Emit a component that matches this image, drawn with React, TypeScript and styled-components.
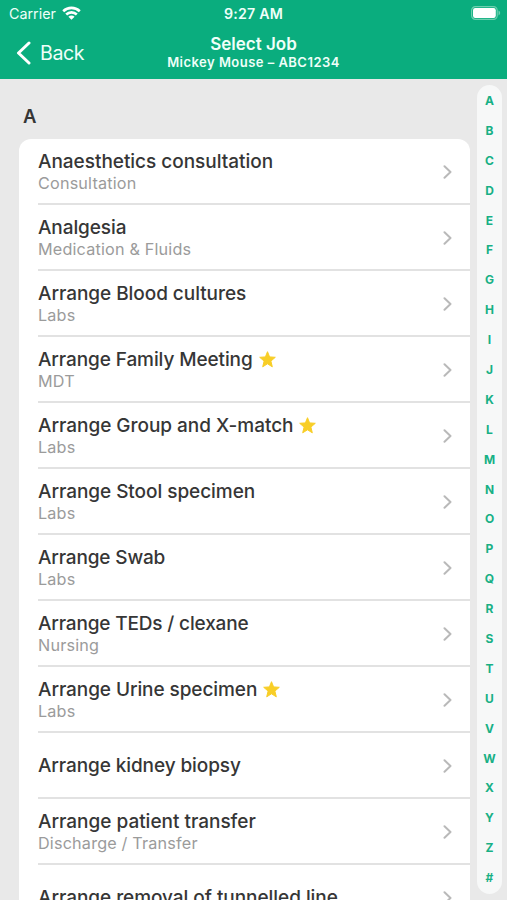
import React from "react";
import styled, { createGlobalStyle } from "styled-components";

const GlobalStyle = createGlobalStyle`
  * { box-sizing: border-box; }
  html, body { margin: 0; padding: 0; overflow: hidden; }
  body {
    background: #e9e9e9;
    font-family: Inter, "Liberation Sans", sans-serif;
  }
`;

const Screen = styled.div`
  width: 507px;
  height: 900px;
  display: flex;
  flex-direction: column;
  overflow: hidden;
  background: #e9e9e9;
`;

const Header = styled.header`
  flex: none;
  height: 79px;
  background: #0aad7e;
  color: #effff9;
`;

const StatusBar = styled.div`
  display: grid;
  grid-template-columns: 1fr auto 1fr;
  align-items: center;
  height: 27px;
  padding: 0 6px 0 9px;
`;

const Carrier = styled.div`
  display: flex;
  align-items: center;
  gap: 6px;
  font-size: 14.3px;
  line-height: 18px;
  svg { display: block; margin-top: -2px; }
`;

const Clock = styled.div`
  font-size: 14.2px;
  font-weight: 600;
  line-height: 18px;
  letter-spacing: 0.2px;
  padding-right: 3px;
`;

const BatterySlot = styled.div`
  display: flex;
  justify-content: flex-end;
  svg { display: block; margin-top: -1px; }
`;

const NavBar = styled.div`
  display: grid;
  grid-template-columns: 1fr auto 1fr;
  align-items: center;
  height: 51px;
  padding: 0 16px;
`;

const BackButton = styled.button`
  display: flex;
  align-items: center;
  gap: 9px;
  padding: 0;
  border: 0;
  background: none;
  color: inherit;
  font: 400 19.6px/24px Inter, sans-serif;
  letter-spacing: -0.4px;
  svg { display: block; }
`;

const Heading = styled.div`
  text-align: center;
`;

const HeadingTitle = styled.h1`
  margin: 0;
  font-size: 17px;
  font-weight: 600;
  line-height: 19px;
`;

const HeadingSubtitle = styled.div`
  font-size: 13px;
  font-weight: 600;
  line-height: 17px;
  letter-spacing: 0.47px;
`;

const Body = styled.div`
  flex: 1;
  min-height: 0;
  display: flex;
`;

const ListColumn = styled.main`
  width: 471px;
  padding: 26px 1px 0 19px;
  overflow: hidden;
`;

const SectionTitle = styled.h2`
  margin: 0 0 12px 4px;
  font-size: 18.5px;
  font-weight: 600;
  line-height: 22px;
  color: #363636;
`;

const Card = styled.ul`
  margin: 0;
  padding: 0 0 0 19px;
  list-style: none;
  background: #fff;
  border-radius: 12px 12px 0 0;
`;

const Row = styled.li`
  height: 66px;
  display: flex;
  align-items: center;
  justify-content: space-between;
  padding: 1px 18px 0 0;
  border-bottom: 2px solid #e2e2e2;
  svg { display: block; }
`;

const JobTitle = styled.div<{ $spacing: number }>`
  display: flex;
  align-items: center;
  gap: 6px;
  font-size: 19px;
  font-weight: 500;
  line-height: 24px;
  letter-spacing: ${(p) => p.$spacing}px;
  color: #363636;
  white-space: nowrap;
  svg { margin-top: -2px; }
`;

const JobCategory = styled.div`
  margin-top: -1px;
  font-size: 16.2px;
  line-height: 20px;
  letter-spacing: 0.18px;
  color: #9b9b9b;
`;

const IndexBar = styled.nav`
  width: 25px;
  height: 809px;
  margin: 6px 0 0 6px;
  padding: 1px 0;
  display: flex;
  flex-direction: column;
  border-radius: 13px;
  background: #f7f8f8;
`;

const IndexLetter = styled.span`
  flex: 1;
  display: flex;
  align-items: center;
  justify-content: center;
  font-size: 12px;
  font-weight: 700;
  line-height: 14px;
  color: #18b085;
`;

const WifiIcon = () => (
  <svg width="19" height="14" viewBox="0 0 19 14" fill="none" stroke="#fff" strokeWidth="2.6">
    <path d="M1.2 5.2C5.9.7 13.1.7 17.8 5.2" />
    <path d="M4.2 8.5c3-2.9 7.6-2.9 10.6 0" />
    <path d="M9.5 13.8 6.4 10.8c1.8-1.6 4.4-1.6 6.2 0z" fill="#fff" stroke="none" />
  </svg>
);

const BatteryIcon = () => (
  <svg width="30" height="14" viewBox="0 0 30 14">
    <rect x=".6" y=".6" width="25.6" height="12.8" rx="3.8" fill="none" stroke="#6dcfaf" strokeWidth="1.2" />
    <rect x="2" y="2" width="22.8" height="10" rx="2.2" fill="#fff" />
    <path d="M27.5 4.6c2.2.8 2.2 4 0 4.8z" fill="#6dcfaf" />
  </svg>
);

const BackIcon = () => (
  <svg width="15" height="24" viewBox="0 0 15 24" fill="none" stroke="#fff" strokeWidth="3" strokeLinecap="round" strokeLinejoin="round">
    <path d="M13 2 2.5 12 13 22" />
  </svg>
);

const ChevronIcon = () => (
  <svg width="9" height="14" viewBox="0 0 9 14" fill="none" stroke="#b9b9b9" strokeWidth="2" strokeLinecap="round" strokeLinejoin="round">
    <path d="m1.5 1.3 6 5.7-6 5.7" />
  </svg>
);

const StarIcon = () => (
  <svg width="17" height="17" viewBox="0 0 17 17" fill="#f8ce27">
    <path d="m8.5.7 2.1 5.2 5.7.4-4.4 3.8 1.4 5.7-4.8-3-4.8 3 1.4-5.7L.7 6.3l5.7-.4z" stroke="#f8ce27" strokeWidth="1" strokeLinejoin="round" />
  </svg>
);

interface Job {
  title: string;
  category?: string;
  starred?: boolean;
  spacing: number;
}

const jobs: Job[] = [
  { title: "Anaesthetics consultation", category: "Consultation", spacing: -0.03 },
  { title: "Analgesia", category: "Medication & Fluids", spacing: -0.1 },
  { title: "Arrange Blood cultures", category: "Labs", spacing: -0.05 },
  { title: "Arrange Family Meeting", category: "MDT", starred: true, spacing: -0.1 },
  { title: "Arrange Group and X-match", category: "Labs", starred: true, spacing: -0.03 },
  { title: "Arrange Stool specimen", category: "Labs", spacing: -0.05 },
  { title: "Arrange Swab", category: "Labs", spacing: -0.16 },
  { title: "Arrange TEDs / clexane", category: "Nursing", spacing: -0.16 },
  { title: "Arrange Urine specimen", category: "Labs", starred: true, spacing: -0.08 },
  { title: "Arrange kidney biopsy", spacing: -0.1 },
  { title: "Arrange patient transfer", category: "Discharge / Transfer", spacing: -0.01 },
  { title: "Arrange removal of tunnelled line", spacing: -0.05 },
];

const letters = "ABCDEFGHIJKLMNOPQRSTUVWXYZ#".split("");

export default function App() {
  return (
    <Screen>
      <GlobalStyle />
      <Header>
        <StatusBar>
          <Carrier>
            Carrier
            <WifiIcon />
          </Carrier>
          <Clock>9:27 AM</Clock>
          <BatterySlot>
            <BatteryIcon />
          </BatterySlot>
        </StatusBar>
        <NavBar>
          <BackButton>
            <BackIcon />
            Back
          </BackButton>
          <Heading>
            <HeadingTitle>Select Job</HeadingTitle>
            <HeadingSubtitle>Mickey Mouse – ABC1234</HeadingSubtitle>
          </Heading>
        </NavBar>
      </Header>
      <Body>
        <ListColumn>
          <SectionTitle>A</SectionTitle>
          <Card>
            {jobs.map((job) => (
              <Row key={job.title}>
                <div>
                  <JobTitle $spacing={job.spacing}>
                    {job.title}
                    {job.starred && <StarIcon />}
                  </JobTitle>
                  {job.category && <JobCategory>{job.category}</JobCategory>}
                </div>
                <ChevronIcon />
              </Row>
            ))}
          </Card>
        </ListColumn>
        <IndexBar>
          {letters.map((letter) => (
            <IndexLetter key={letter}>{letter}</IndexLetter>
          ))}
        </IndexBar>
      </Body>
    </Screen>
  );
}
